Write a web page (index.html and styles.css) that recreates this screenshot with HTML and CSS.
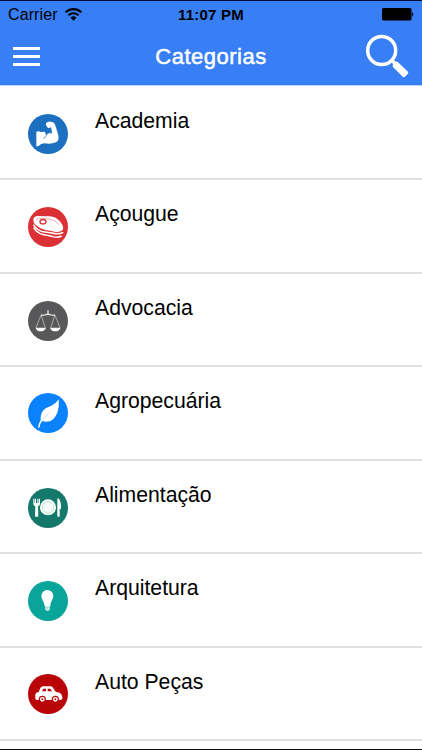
FILE: index.html
```html
<!DOCTYPE html>
<html lang="pt-BR">
<head>
  <meta charset="UTF-8" />
  <meta name="viewport" content="width=device-width, initial-scale=1.0"/>
  <title>Categorias</title>
  <link rel="stylesheet" href="styles.css">
</head>
<body>
  <header class="header">
    <div class="status-bar">
      <div class="carrier">
        <span>Carrier</span>
        <svg class="wifi" viewBox="0 0 16 12">
          <path d="M.6 4a10.5 10.5 0 0 1 14.8 0M3.2 6.8a6.8 6.8 0 0 1 9.6 0" fill="none" stroke="#000" stroke-width="1.9"/>
          <path d="M5.2 9a4 4 0 0 1 5.6 0L8 11.9z"/>
        </svg>
      </div>
      <span class="time">11:07 PM</span>
      <svg class="battery" viewBox="0 0 32 13">
        <rect width="29.5" height="12.5" rx="1.5"/>
        <path d="M30 4q2.4 2.2 0 4.5z"/>
      </svg>
    </div>
    <nav class="nav-bar">
      <button class="menu-button" aria-label="Menu"><i></i><i></i><i></i></button>
      <h1 class="title">Categorias</h1>
      <button class="search-button" aria-label="Buscar">
        <svg viewBox="0 0 44 44">
          <circle cx="16.7" cy="16.5" r="14" fill="none" stroke="#fff" stroke-width="3.5"/>
          <path d="M26 25.5l4.5 4.5" stroke="#fff" stroke-width="3.5"/>
          <path d="M32.8 28L42.7 37.4Q44 38.7 42.7 40L40.2 42.6Q38.8 43.8 37.5 42.6L28 32.9Q27 31.7 28 30.6L30.4 28.2Q31.6 27 32.8 28z" fill="#fff"/>
        </svg>
      </button>
    </nav>
  </header>

  <ul class="categories">
    <li class="category">
      <svg class="icon academia" viewBox="0 0 120 120">
        <path d="M58 40Q52 35 54 28Q58 22 68 23L75 25Q81 28 83 37L91 64Q94 80 84 85Q69 92 49 88Q38 89 32 96L25 97V54Q31 50 38 54L50 53Q55 58 53 67Q63 52 71 60Q73 53 69 40L63 42Q60 43 58 40z" fill="#fff"/>
        <path d="M53 66Q51 73 45 73" fill="none" stroke="#1d70bf" stroke-width="2"/>
      </svg>
      <span class="name">Academia</span>
    </li>
    <li class="category">
      <svg class="icon acougue" viewBox="0 0 120 120">
        <path d="M16 38Q16 28 31 27Q49 28 65 28Q84 28 98 46Q109 61 104 69Q94 78 79 74Q67 71 52 69Q38 67 24 55Q15 47 16 38z" fill="#fff"/>
        <path d="M25 39Q24 34 35 34L66 36Q81 37 92 53" fill="none" stroke="#e98585" stroke-width="2"/>
        <ellipse cx="45" cy="44" rx="9" ry="6.5" fill="#fff" stroke="#db3136" stroke-width="4"/>
        <path d="M16 53Q27 71 46 74L72 78Q90 84 106 76M17 62Q28 80 48 83L72 88Q89 94 101 87" fill="none" stroke="#fff" stroke-width="4.5"/>
      </svg>
      <span class="name">Açougue</span>
    </li>
    <li class="category">
      <svg class="icon advocacia" viewBox="0 0 120 120">
        <path d="M60 27V43M39 42Q50 45 60 38Q70 45 81 42" fill="none" stroke="#ddd" stroke-width="4"/>
        <path d="M39 42L24 80M39 42L52 80M81 42L68 80M81 42L96 80" fill="none" stroke="#aaa" stroke-width="3"/>
        <path d="M22 80H54Q50 91 38 91Q26 91 22 80zM66 80H98Q94 91 82 91Q70 91 66 80z" fill="#fff"/>
      </svg>
      <span class="name">Advocacia</span>
    </li>
    <li class="category">
      <svg class="icon agropecuaria" viewBox="0 0 120 120">
        <path d="M92 19Q95 38 88 59Q80 79 65 85Q53 88 42 84Q36 91 35 103L30 105Q30 94 38 81Q37 63 46 52Q54 43 70 38Q84 32 92 19z" fill="#fff"/>
        <path d="M42 82Q53 69 63 60" fill="none" stroke="#a9d3ff" stroke-width="2"/>
      </svg>
      <span class="name">Agropecuária</span>
    </li>
    <li class="category">
      <svg class="icon alimentacao" viewBox="0 0 120 120">
        <circle cx="60" cy="58" r="24" fill="#fff"/>
        <circle cx="60" cy="58" r="17.5" fill="#f4faf8" stroke="#a5cdc1" stroke-width="2"/>
        <path d="M16 32V47Q16 54 22 55L21 85Q26 89 31 85L30 55Q36 54 36 47V32H33V45H31.5V32H28V45H24V32H20.5V45H19V32z" fill="#fff"/>
        <path d="M88 85V34Q88 28 93 32Q100 42 99 63H95V85Q92 88 88 85z" fill="#fff"/>
      </svg>
      <span class="name">Alimentação</span>
    </li>
    <li class="category">
      <svg class="icon arquitetura" viewBox="0 0 120 120">
        <path d="M50 75Q49 66 44 58Q40 52 40 45Q42 28 58 27Q75 28 76 45Q76 52 72 58Q67 66 67 75z" fill="#fff"/>
        <path d="M51 75H66V84Q64 90 58.500 90Q53 90 51 84z" fill="#d5f0ed"/>
        <path d="M51 79H66M52 84H65" stroke="#72c9c2" stroke-width="1.5"/>
      </svg>
      <span class="name">Arquitetura</span>
    </li>
    <li class="category">
      <svg class="icon auto-pecas" viewBox="0 0 120 120">
        <path d="M22 75V60Q24 55 32 54L37 42Q39 37 45 37H69Q74 38 77 44L83 53L95 56Q103 61 103 69V75Q101 78 93 78H29Q23 78 22 75z" fill="#fff"/>
        <path d="M42 52L46 44H54V52zM59 44H67L72 52H59z" fill="#b90508"/>
        <circle cx="43" cy="76" r="9" fill="#fff" stroke="#b90508" stroke-width="3.500"/>
        <circle cx="82" cy="76" r="9" fill="#fff" stroke="#b90508" stroke-width="3.500"/>
        <circle cx="43" cy="76" r="3" fill="#b90508"/>
        <circle cx="82" cy="76" r="3" fill="#b90508"/>
      </svg>
      <span class="name">Auto Peças</span>
    </li>
  </ul>
</body>
</html>
```
FILE: styles.css
```css
* {
  box-sizing: border-box;
}

body {
  margin: 0;
  height: 750px;
  overflow: hidden;
  background-color: white;
  border-bottom: 1px solid #111;
  font-family: "Liberation Sans", Arial, sans-serif;
  color: #000;
}

.header {
  height: 86px;
  background-color: #387ef5;
  border-top: 1px solid #050b3c;
  border-bottom: 1px solid #b5cffb;
}

.status-bar {
  display: grid;
  grid-template-columns: 1fr auto 1fr;
  align-items: center;
  height: 27px;
  padding: 0 8px;
  font-size: 16px;
}

.carrier {
  display: flex;
  align-items: center;
  gap: 7px;
  letter-spacing: 0.1px;
}

.wifi {
  width: 17px;
  height: 13px;
}

.time {
  font-size: 15px;
  font-weight: bold;
  letter-spacing: 0.2px;
}

.battery {
  width: 32px;
  height: 13px;
  justify-self: end;
}

.nav-bar {
  display: grid;
  grid-template-columns: 1fr auto 1fr;
  align-items: center;
  height: 56px;
  padding: 0 13px;
}

.nav-bar button {
  padding: 0;
  border: none;
  background: none;
}

.menu-button {
  display: flex;
  flex-direction: column;
  gap: 5px;
  width: 27px;
}

.menu-button i {
  height: 3px;
  background-color: white;
}

.title {
  margin: 0;
  padding-top: 1px;
  font-size: 22px;
  font-weight: normal;
  letter-spacing: 0.5px;
  color: white;
  -webkit-text-stroke: 0.5px white;
}

.search-button {
  justify-self: end;
  width: 44px;
  height: 44px;
}

.search-button svg {
  display: block;
}

.categories {
  margin: 0;
  padding: 0.5px 0 0;
  list-style: none;
}

.category {
  display: flex;
  gap: 27px;
  height: 93.5px;
  padding: 21px 28px 0;
  border-bottom: 2px solid #e1e1e1;
}

.name {
  font-size: 21.2px;
  line-height: 26px;
}

.icon {
  flex: none;
  width: 40px;
  height: 40px;
  margin-top: 6px;
  border-radius: 50%;
}

.academia {
  background-color: #1d70bf;
}

.acougue {
  background-color: #db3136;
}

.advocacia {
  background-color: #58585a;
}

.agropecuaria {
  margin-top: 5px;
  background-color: #0a82fb;
}

.alimentacao {
  background-color: #14796a;
}

.arquitetura {
  background-color: #0aa59a;
}

.auto-pecas {
  margin-top: 5px;
  background-color: #b90508;
}
```
